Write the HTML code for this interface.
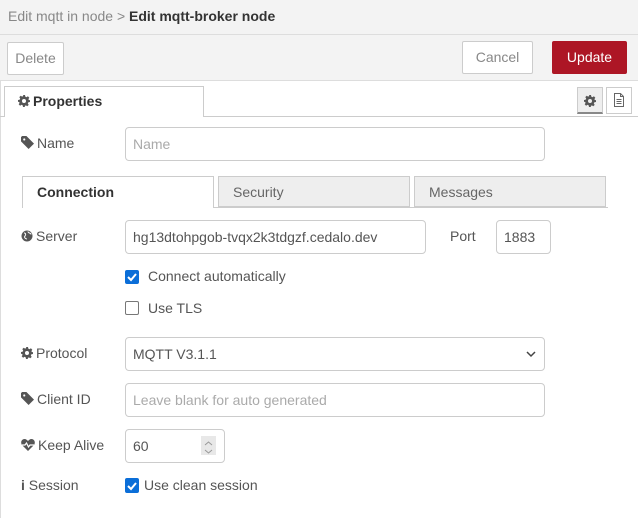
<!DOCTYPE html>
<html><head><meta charset="utf-8"><style>
*{box-sizing:border-box;margin:0;padding:0}
body{width:638px;height:518px;overflow:hidden;background:#fff;font-family:"Liberation Sans",Arial,sans-serif;font-size:14px;color:#555;position:relative}
.a{position:absolute}
.hdr{left:0;top:0;width:638px;height:81px;background:#f3f3f3;border-bottom:1px solid #ddd}
.btn{position:absolute;border:1px solid #ccc;background:#fff;color:#888;text-align:center;line-height:31px;border-radius:2px}
.inp{position:absolute;border:1px solid #ccc;border-radius:4px;height:34px;line-height:32px;padding-left:7px;background:#fff;color:#555}
.ph{color:#aaa}
.lbl{position:absolute;color:#555}
.lbl svg{vertical-align:-1px;margin-right:3px}
.cb{position:absolute;width:14px;height:14px;border-radius:2px}
.on{background:#0b6ed8}
.off{border:1.5px solid #777;background:#fff}
</style></head><body>
<svg width="0" height="0" style="position:absolute"><defs>
<symbol id="tag" viewBox="0 0 12 12"><path d="M0 1v4l7 7 5-5-7-7H1zM3 2.2a1 1 0 1 1 0 2 1 1 0 0 1 0-2z" fill="#555" fill-rule="evenodd"/></symbol>
<symbol id="gear" viewBox="0 0 12 12"><path d="M5 0h2l.3 1.6 1.2.6 1.4-.9 1.4 1.4-.9 1.4.6 1.2L12 5v2l-1.6.3-.6 1.2.9 1.4-1.4 1.4-1.4-.9-1.2.6L7 12H5l-.3-1.6-1.2-.6-1.4.9-1.4-1.4.9-1.4-.6-1.2L0 7V5l1.6-.3.6-1.2-.9-1.4 1.4-1.4 1.4.9 1.2-.6zM6 4a2 2 0 1 0 0 4 2 2 0 0 0 0-4z" fill="#555" fill-rule="evenodd"/></symbol>
</defs></svg>
<div class="a" style="left:0;top:0;width:1px;height:518px;background:#ddd"></div>
<div class="a hdr"></div>
<div class="a" style="left:0;top:34px;width:638px;height:1px;background:#ddd"></div>
<div class="a" style="left:8px;top:8px;color:#888">Edit mqtt in node &gt; <b style="color:#333">Edit mqtt-broker node</b></div>
<div class="btn" style="left:7px;top:42px;width:57px;height:33px">Delete</div>
<div class="btn" style="left:462px;top:41px;width:71px;height:33px">Cancel</div>
<div class="btn" style="left:552px;top:41px;width:75px;height:33px;background:#ad1625;border-color:#ad1625;color:#fff">Update</div>

<div class="a" style="left:0;top:116px;width:638px;height:1px;background:#ccc"></div>
<div class="a" style="left:4px;top:86px;width:200px;height:31px;background:#fff;border:1px solid #ccc;border-bottom:none;color:#333;font-weight:bold;line-height:29px;padding-left:13px"><svg width="12" height="12" style="vertical-align:-1px;margin-right:3px"><use href="#gear" fill="#777"/></svg>Properties</div>
<div class="a" style="left:577px;top:87px;width:26px;height:27px;background:#eee;border:1px solid #ccc;border-bottom:2px solid #888;text-align:center;padding-top:6px"><svg width="12" height="12"><use href="#gear"/></svg></div>
<div class="a" style="left:606px;top:87px;width:26px;height:27px;background:#fff;border:1px solid #ccc;text-align:center;padding-top:5px"><svg width="10" height="14"><path d="M.5.5h6l3 3v10h-9z M6.5.5v3h3 M2.5 6.5h5M2.5 8.5h5M2.5 10.5h5" stroke="#666" fill="none"/></svg></div>

<div class="lbl" style="left:21px;top:135px"><svg width="13" height="13"><use href="#tag"/></svg>Name</div>
<div class="inp ph" style="left:125px;top:127px;width:420px">Name</div>

<div class="a" style="left:22px;top:207px;width:586px;height:1px;background:#ccc"></div>
<div class="a" style="left:22px;top:176px;width:192px;height:32px;background:#fff;border:1px solid #ccc;border-bottom:none;color:#333;font-weight:bold;line-height:31px;padding-left:14px">Connection</div>
<div class="a" style="left:218px;top:176px;width:192px;height:31px;background:#eee;border:1px solid #ccc;line-height:30px;padding-left:14px;color:#666">Security</div>
<div class="a" style="left:414px;top:176px;width:192px;height:31px;background:#eee;border:1px solid #ccc;line-height:30px;padding-left:14px;color:#666">Messages</div>

<div class="lbl" style="left:21px;top:228px"><svg width="12" height="12"><circle cx="6" cy="6" r="5.5" fill="#555"/><path d="M3 3c2 0 2 2 1 3s0 3 2 3M7 1.5c0 2 3 1 3 3" stroke="#fff" fill="none"/></svg>Server</div>
<div class="inp" style="left:125px;top:220px;width:301px">hg13dtohpgob-tvqx2k3tdgzf.cedalo.dev</div>
<div class="lbl" style="left:450px;top:228px">Port</div>
<div class="inp" style="left:496px;top:220px;width:55px">1883</div>

<div class="cb on" style="left:125px;top:270px"><svg width="14" height="14"><path d="M3 7l3 3 5-6" stroke="#fff" stroke-width="2" fill="none"/></svg></div>
<div class="lbl" style="left:148px;top:268px">Connect automatically</div>
<div class="cb off" style="left:125px;top:301px"></div>
<div class="lbl" style="left:148px;top:300px">Use TLS</div>

<div class="lbl" style="left:21px;top:345px"><svg width="12" height="12"><use href="#gear"/></svg>Protocol</div>
<div class="inp" style="left:125px;top:337px;width:420px">MQTT V3.1.1<svg class="a" style="right:8px;top:13px" width="10" height="7"><path d="M1 1l4 4 4-4" stroke="#444" stroke-width="1.5" fill="none"/></svg></div>

<div class="lbl" style="left:21px;top:391px"><svg width="13" height="13"><use href="#tag"/></svg>Client ID</div>
<div class="inp ph" style="left:125px;top:383px;width:420px">Leave blank for auto generated</div>

<div class="lbl" style="left:21px;top:437px"><svg width="14" height="12"><path d="M7 12L1 6C-1 3 1 0 3.5 0 5 0 6 1 7 2c1-1 2-2 3.5-2C13 0 15 3 13 6z" fill="#555"/><path d="M1 6h3l1.5-2 2 4 1.5-2h4" stroke="#fff" stroke-width="1.2" fill="none"/></svg>Keep Alive</div>
<div class="inp" style="left:125px;top:429px;width:100px">60<div class="a" style="left:75px;top:6px;width:15px;height:19px;background:#e8e8e8"><svg width="15" height="19"><path d="M4 7l3.5-3 3.5 3M4 12l3.5 3 3.5-3" stroke="#999" fill="none"/></svg></div></div>

<div class="lbl" style="left:21px;top:477px"><b>i</b> Session</div>
<div class="cb on" style="left:125px;top:478px;width:14px;height:15px"><svg width="14" height="15"><path d="M3 8l3 3 5-6" stroke="#fff" stroke-width="2" fill="none"/></svg></div>
<div class="lbl" style="left:144px;top:477px">Use clean session</div>
</body></html>
